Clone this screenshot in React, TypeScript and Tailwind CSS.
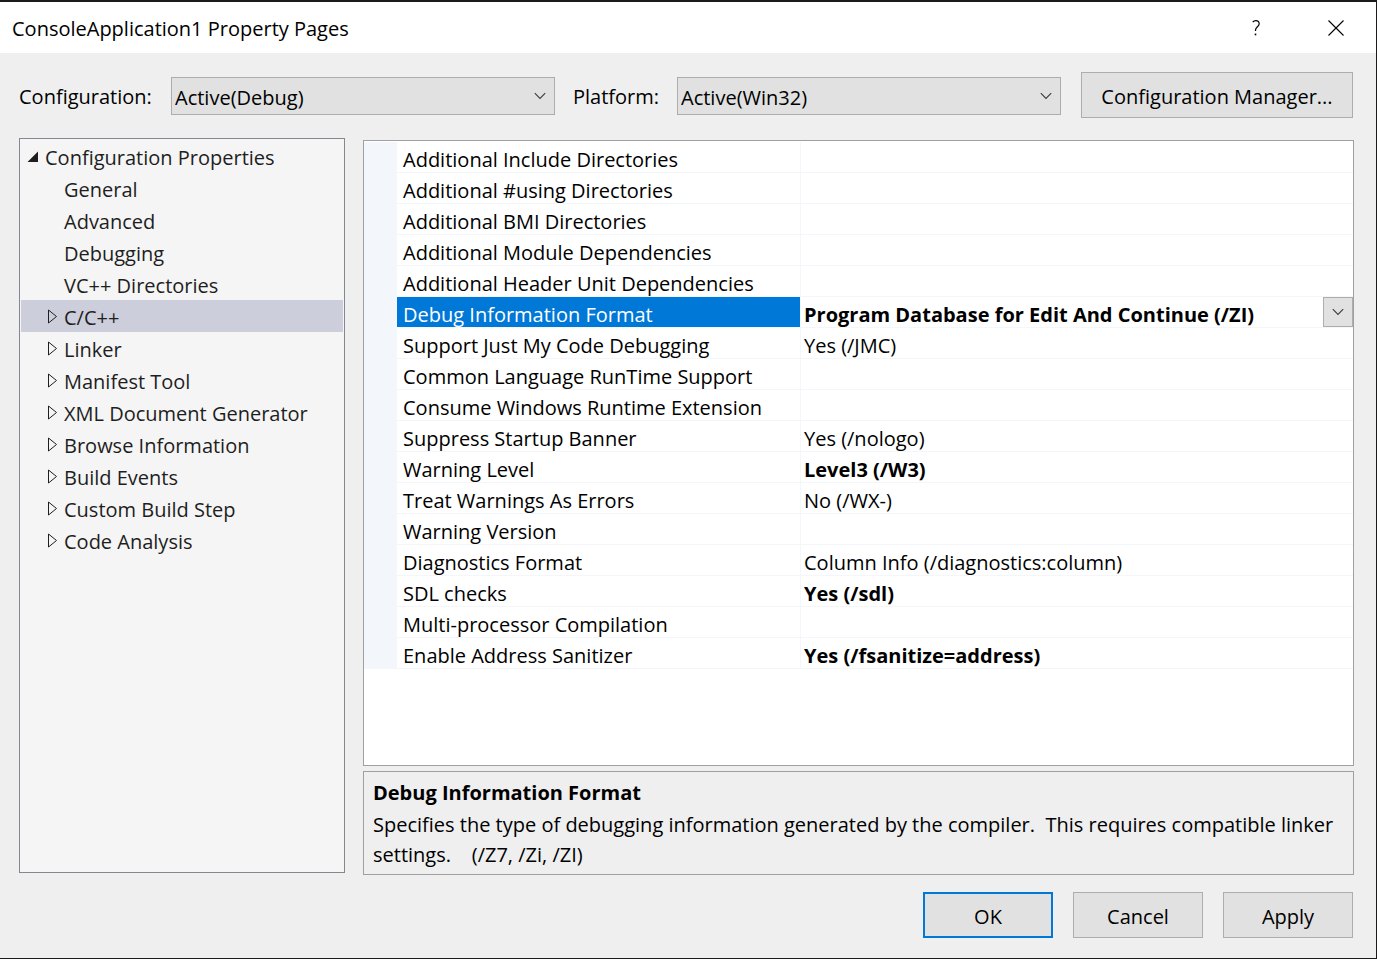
import { useState } from "react";

type Property = { name: string; value?: string; bold?: boolean };

const treeItems: { label: string; branch?: boolean }[] = [
  { label: "General" },
  { label: "Advanced" },
  { label: "Debugging" },
  { label: "VC++ Directories" },
  { label: "C/C++", branch: true },
  { label: "Linker", branch: true },
  { label: "Manifest Tool", branch: true },
  { label: "XML Document Generator", branch: true },
  { label: "Browse Information", branch: true },
  { label: "Build Events", branch: true },
  { label: "Custom Build Step", branch: true },
  { label: "Code Analysis", branch: true },
];

const properties: Property[] = [
  { name: "Additional Include Directories" },
  { name: "Additional #using Directories" },
  { name: "Additional BMI Directories" },
  { name: "Additional Module Dependencies" },
  { name: "Additional Header Unit Dependencies" },
  { name: "Debug Information Format", value: "Program Database for Edit And Continue (/ZI)", bold: true },
  { name: "Support Just My Code Debugging", value: "Yes (/JMC)" },
  { name: "Common Language RunTime Support" },
  { name: "Consume Windows Runtime Extension" },
  { name: "Suppress Startup Banner", value: "Yes (/nologo)" },
  { name: "Warning Level", value: "Level3 (/W3)", bold: true },
  { name: "Treat Warnings As Errors", value: "No (/WX-)" },
  { name: "Warning Version" },
  { name: "Diagnostics Format", value: "Column Info (/diagnostics:column)" },
  { name: "SDL checks", value: "Yes (/sdl)", bold: true },
  { name: "Multi-processor Compilation" },
  { name: "Enable Address Sanitizer", value: "Yes (/fsanitize=address)", bold: true },
];

function Chevron({ className = "" }: { className?: string }) {
  return (
    <svg aria-hidden="true" width="12" height="8" viewBox="0 0 12 8" className={className}>
      <path d="M0.8 1.2 L6 6.4 L11.2 1.2" fill="none" stroke="#3c3c3c" strokeWidth="1.1" />
    </svg>
  );
}

function Dropdown({ id, option }: { id: string; option: string }) {
  return (
    <div className="grid min-w-0 flex-1 items-center">
      <select
        id={id}
        className="col-start-1 row-start-1 h-[38px] w-full appearance-none rounded-none border border-[#adadad] bg-[#e1e1e1] pt-1 pl-[3px]"
      >
        <option>{option}</option>
      </select>
      <Chevron className="pointer-events-none col-start-1 row-start-1 mr-[9px] justify-self-end" />
    </div>
  );
}

function DialogButton({ label, primary }: { label: string; primary?: boolean }) {
  return (
    <button
      type="button"
      className={`h-[46px] w-[130px] bg-[#e1e1e1] pt-1 ${primary ? "border-2 border-[#0078d7]" : "border border-[#adadad]"}`}
    >
      {label}
    </button>
  );
}

export default function App() {
  const [page, setPage] = useState("C/C++");

  return (
    <div className="flex min-h-screen flex-col border-t-2 border-r border-b border-[#1c1a1b] bg-[#efefef] font-['Open_Sans',sans-serif] text-[20px] leading-[30px] text-black">
      <header className="flex h-[51px] items-center bg-white pr-5 pl-3">
        <h1 className="flex-1 pt-0.5">ConsoleApplication1 Property Pages</h1>
        <div className="flex gap-10">
          <button type="button" aria-label="Help" className="flex size-10 items-center justify-center">
            <svg aria-hidden="true" width="8" height="16" viewBox="0 0 8 16">
              <path d="M0.7 2.2 C1.6 1 2.7 0.7 3.9 0.7 C6 0.7 7.2 1.8 7.2 3.7 C7.2 6.6 3.5 7 3.5 10.2 V11" fill="none" stroke="#000" strokeWidth="1.2" />
              <path d="M2.7 13.6h1.6v1.7H2.7z" />
            </svg>
          </button>
          <button type="button" aria-label="Close" className="flex size-10 items-center justify-center">
            <svg aria-hidden="true" width="16" height="16" viewBox="0 0 16 16">
              <path d="M0.5 0.5 L15.5 15.5 M15.5 0.5 L0.5 15.5" fill="none" stroke="#000" strokeWidth="1.1" />
            </svg>
          </button>
        </div>
      </header>

      <div className="flex items-start pt-[19px] pr-[23px] pl-[19px]">
        <div className="flex min-w-0 flex-1 items-center pt-[5px]">
          <label htmlFor="configuration" className="w-[152px] shrink-0 pt-0.5">Configuration:</label>
          <Dropdown id="configuration" option="Active(Debug)" />
          <label htmlFor="platform" className="ml-[18px] w-[104px] shrink-0 pt-0.5">Platform:</label>
          <Dropdown id="platform" option="Active(Win32)" />
        </div>
        <button type="button" className="ml-5 h-[46px] w-[272px] shrink-0 border border-[#adadad] bg-[#e1e1e1] pt-1">
          Configuration Manager...
        </button>
      </div>

      <main className="flex flex-1 gap-[18px] pt-5 pr-[22px] pl-[19px]">
        <nav aria-label="Property pages" className="mb-0.5 w-[326px] shrink-0 border border-[#828790] bg-[#f5f5f5] p-px text-[#1e1e1e]">
          <button type="button" className="flex h-8 w-full items-center gap-[7px] pt-1 pl-1.5 text-left">
            <svg aria-hidden="true" width="11" height="11" viewBox="0 0 11 11" className="mb-1">
              <path d="M11 0.5 V11 H0.5 Z" fill="#1e1e1e" />
            </svg>
            Configuration Properties
          </button>
          <ul>
            {treeItems.map((item) => (
              <li key={item.label}>
                <button
                  type="button"
                  onClick={() => setPage(item.label)}
                  className={`flex h-8 w-full items-center gap-1.5 pt-1 pl-[26px] text-left ${page === item.label ? "bg-[#cccedb]" : ""}`}
                >
                  <svg aria-hidden="true" width="11" height="16" viewBox="0 0 11 16" className="mb-0.5">
                    {item.branch && <path d="M1.5 1 V14 L9.5 7.5 Z" fill="none" stroke="#1e1e1e" strokeWidth="1" />}
                  </svg>
                  {item.label}
                </button>
              </li>
            ))}
          </ul>
        </nav>

        <div className="flex min-w-0 flex-1 flex-col gap-[5px] pt-0.5">
          <section className="flex-1 border border-[#a0a0a0] bg-white pt-px">
            <table className="w-full table-fixed border-separate border-spacing-0">
              <colgroup>
                <col className="w-[33px]" />
                <col className="w-[404px]" />
                <col />
              </colgroup>
              <tbody>
                {properties.map((property, index) => (
                  <tr key={property.name} className="h-[31px]">
                    <td className="bg-[#f3f7fc] p-0" />
                    <th scope="row" className="border-r border-b border-[#f3f7fc] p-0 text-left font-normal">
                      <div className={`h-[30px] pt-[3px] pl-1.5 leading-[30px] whitespace-nowrap ${index === 5 ? "bg-[#0078d7] text-white" : ""}`}>
                        {property.name}
                      </div>
                    </th>
                    <td className="border-b border-[#f3f7fc] p-0">
                      <div className="flex h-[30px] justify-between pl-[3px]">
                        <span className={`pt-[3px] whitespace-nowrap ${property.bold ? "font-bold" : ""}`}>{property.value}</span>
                        {index === 5 && (
                          <button
                            type="button"
                            aria-label="Choose a value"
                            className="flex size-[30px] shrink-0 items-center justify-center border border-[#adadad] bg-[#e1e1e1]"
                          >
                            <Chevron />
                          </button>
                        )}
                      </div>
                    </td>
                  </tr>
                ))}
              </tbody>
            </table>
          </section>

          <section className="h-[104px] border border-[#a0a0a0] px-[9px] pt-1.5">
            <h2 className="mb-0.5 font-bold">Debug Information Format</h2>
            <p className="whitespace-pre-wrap">
              {"Specifies the type of debugging information generated by the compiler.  This requires compatible linker settings.    (/Z7, /Zi, /ZI)"}
            </p>
          </section>
        </div>
      </main>

      <footer className="flex justify-end gap-5 pt-[17px] pr-[23px] pb-5">
        <DialogButton label="OK" primary />
        <DialogButton label="Cancel" />
        <DialogButton label="Apply" />
      </footer>
    </div>
  );
}
